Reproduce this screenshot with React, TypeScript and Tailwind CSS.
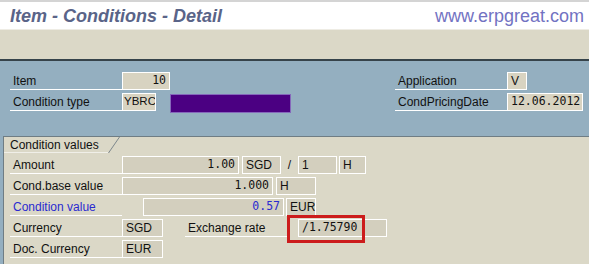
import type { ReactNode } from "react";

const mono = "font-['DejaVu_Sans_Mono','Liberation_Mono',monospace] text-[11.5px]";

function Field({
  w,
  children,
  right,
  isMono,
  className = "",
}: {
  w: string;
  children?: ReactNode;
  right?: boolean;
  isMono?: boolean;
  className?: string;
}) {
  return (
    <div
      className={`${w} h-full shrink-0 border border-white bg-[#d3cfbe] flex items-center px-[3px] overflow-hidden whitespace-nowrap ${
        right ? "justify-end" : ""
      } ${isMono ? mono : "text-[12px]"} ${className}`}
    >
      {children}
    </div>
  );
}

function Label({ w = "w-[112px]", children, className = "" }: { w?: string; children: ReactNode; className?: string }) {
  return (
    <div className={`${w} h-full shrink-0 border-b border-white flex items-center pl-[3px] text-[12px] ${className}`}>
      {children}
    </div>
  );
}

export default function App() {
  return (
    <div className="w-[589px] h-[264px] overflow-hidden flex flex-col bg-[#94afc0] text-[#111] font-['Liberation_Sans',Arial,sans-serif]">
      {/* title */}
      <div className="h-[30px] shrink-0 bg-white border-t-2 border-[#d4d4d4] border-b border-b-[#eeece4] flex items-center justify-between pl-[10px] pr-[5px]">
        <span className="text-[18px] font-bold italic text-[#5a6488] leading-none">Item - Conditions - Detail</span>
        <span className="text-[18px] text-[#7272c2] leading-none">www.erpgreat.com</span>
      </div>
      {/* toolbar */}
      <div className="h-[29px] shrink-0 bg-[#dbd8c7]" />
      <div className="h-[2px] shrink-0 bg-[#36434a]" />

      {/* header */}
      <div className="h-[75px] shrink-0 pt-[11px] pl-[10px] flex flex-col gap-[3px]">
        <div className="flex h-[18px]">
          <Label>Item</Label>
          <Field w="w-[48px]" right isMono className="bg-[#d8d3c1]">10</Field>
          <div className="w-[225px] shrink-0" />
          <Label>Application</Label>
          <Field w="w-[20px]" className="bg-[#d8d3c1]">V</Field>
        </div>
        <div className="flex h-[18px]">
          <Label>Condition type</Label>
          <Field w="w-[34px]" className="bg-[#d8d3c1] !px-[1px] !text-[11.5px]">YBRC</Field>
          <div className="w-[14px] shrink-0" />
          <div className="w-[121px] h-[19px] mt-[1px] shrink-0 bg-[#4b0082] border border-[#8668bb]" />
          <div className="w-[104px] shrink-0" />
          <Label>CondPricingDate</Label>
          <Field w="w-[76px]" isMono className="bg-[#d8d3c1]">12.06.2012</Field>
        </div>
      </div>

      {/* group box */}
      <div className="flex-1 ml-[3px] bg-[#dbd8c7] border-l border-t border-[#6f7d84] relative">
        <div className="h-[16px] flex items-stretch">
          <div className="w-[104px] pl-[6px] flex items-center text-[12px] border-b border-[#f0efe8]">Condition values</div>
          <svg width="12" height="16" viewBox="0 0 12 16" className="block">
            <line x1="0.5" y1="16" x2="11.5" y2="0" stroke="#7d878c" strokeWidth="1" />
          </svg>
        </div>

        <div className="mt-[3px] pl-[6px] flex flex-col gap-[3px]">
          <div className="flex h-[18px] items-stretch">
            <Label>Amount</Label>
            <Field w="w-[117px]" right isMono>1.00</Field>
            <div className="w-[3px] shrink-0" />
            <Field w="w-[39px]">SGD</Field>
            <div className="w-[17px] shrink-0 flex items-center justify-center text-[12px]">/</div>
            <Field w="w-[39px]">1</Field>
            <div className="w-[2px] shrink-0" />
            <Field w="w-[27px]">H</Field>
          </div>
          <div className="flex h-[18px] items-stretch">
            <Label>Cond.base value</Label>
            <Field w="w-[151px]" right isMono>1.000</Field>
            <div className="w-[3px] shrink-0" />
            <Field w="w-[40px]">H</Field>
          </div>
          <div className="flex h-[18px] items-stretch">
            <Label className="text-[#2a2ad0]">Condition value</Label>
            <div className="w-[21px] shrink-0" />
            <Field w="w-[141px]" right isMono className="text-[#2a2ad0]">0.57</Field>
            <div className="w-[2px] shrink-0" />
            <Field w="w-[30px]">EUR</Field>
          </div>
          <div className="flex h-[18px] items-stretch">
            <Label>Currency</Label>
            <Field w="w-[41px]">SGD</Field>
            <div className="w-[22px] shrink-0" />
            <Label w="w-[105px]">Exchange rate</Label>
            <div className="w-[8px] shrink-0" />
            <div className="relative h-full">
              <Field w="w-[89px]" isMono>/1.75790</Field>
              <div className="absolute left-[-11px] top-[-4px] w-[78px] h-[28px] border-[3px] border-[#cc1c1c]" />
            </div>
          </div>
          <div className="flex h-[18px] items-stretch">
            <Label>Doc. Currency</Label>
            <Field w="w-[41px]">EUR</Field>
          </div>
        </div>
      </div>
    </div>
  );
}
